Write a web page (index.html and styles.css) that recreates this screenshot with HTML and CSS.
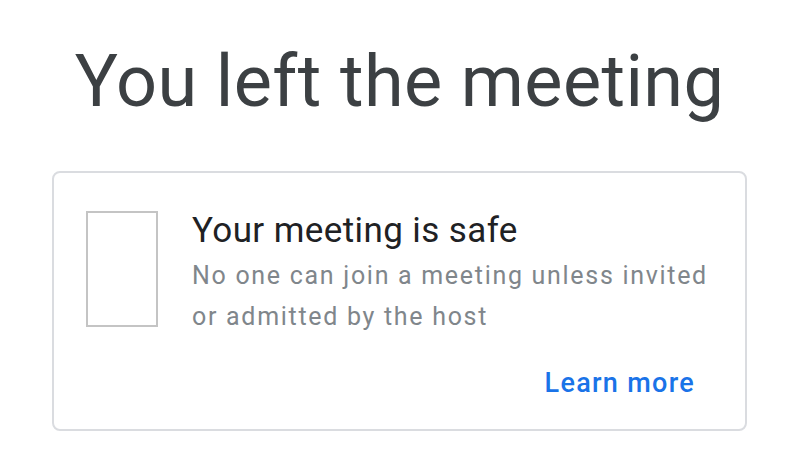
FILE: index.html
```html
<!DOCTYPE html>
<html>
<head>
<meta name="viewport" content="width=device-width, initial-scale=1">
<link rel="stylesheet" href="styles.css">
</head>
<body>

<div class="page">
  <h1 class="title">You left the meeting</h1>

  <div class="card">
    <div class="card-body">
      <div class="shield"></div>
      <div class="info">
        <div class="info-title">Your meeting is safe</div>
        <div class="info-text">No one can join a meeting unless invited or admitted by the host</div>
      </div>
    </div>
    <div class="card-actions">
      <a class="learn" href="#">Learn more</a>
    </div>
  </div>
</div>

</body>
</html>
```
FILE: styles.css
```css
* {
  box-sizing: border-box;
}

body {
  margin: 0;
  background: #fff;
  font-family: Roboto, "Liberation Sans", sans-serif;
}

.page {
  display: flex;
  flex-direction: column;
  align-items: center;
  padding-top: 39px;
  padding-left: 9px;
}

.title {
  margin: 0;
  font-size: 72px;
  font-weight: 400;
  line-height: 86px;
  color: #3c4043;
  letter-spacing: 0.4px;
}

.card {
  margin-top: 46px;
  width: 695px;
  border: 2px solid #dadce0;
  border-radius: 8px;
  padding: 38px 18px 26px 32px;
}

.card-body {
  display: flex;
  gap: 34px;
}

.shield {
  flex: none;
  width: 72px;
  height: 116px;
  border: 2px solid #c4c4c4;
}

.info {
  flex: 1;
}

.info-title {
  font-size: 35px;
  line-height: 40px;
  letter-spacing: 0.4px;
  color: #202124;
}

.info-text {
  margin-top: 4px;
  font-size: 25px;
  line-height: 41px;
  letter-spacing: 1.7px;
  color: #80868b;
}

.card-actions {
  display: flex;
  justify-content: flex-end;
  margin-top: 26px;
  padding-right: 32px;
}

.learn {
  font-size: 27px;
  font-weight: 500;
  color: #1a73e8;
  text-decoration: none;
  line-height: 40px;
  letter-spacing: 1.3px;
}
```
